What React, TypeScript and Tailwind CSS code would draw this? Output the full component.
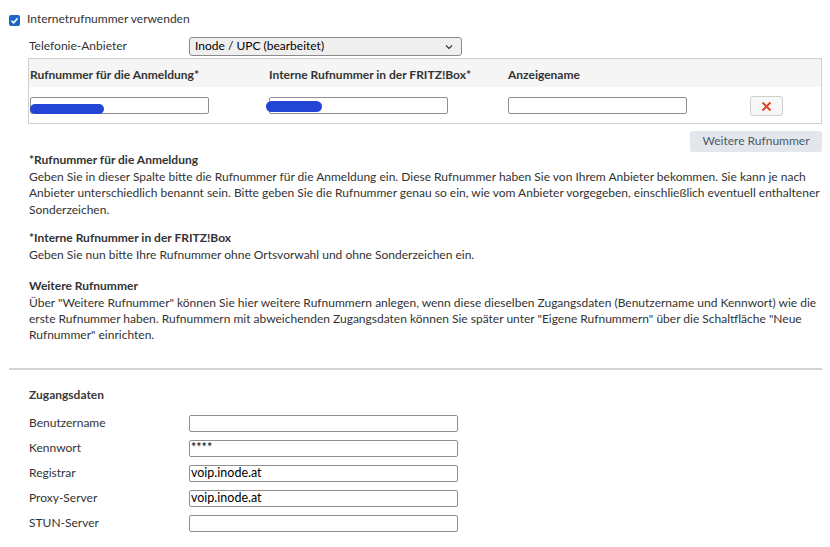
import React from "react";

const font = { fontFamily: "Lato, 'Open Sans', sans-serif" };

function Input({ value, className = "" }: { value?: string; className?: string }) {
  return (
    <div
      className={`h-[17px] border border-[#8f8f8f] bg-white rounded-[2px] flex items-center px-[1px] text-[12.5px] text-black leading-none ${className}`}
    >
      {value}
    </div>
  );
}

export default function App() {
  return (
    <div className="w-[830px] h-[547px] bg-white text-[#333] text-[12px] leading-[16.5px] overflow-hidden relative" style={font}>
      <div className="pt-[12px] pl-[9px] pr-[8px]">
        <div className="flex items-center gap-[7px] h-[15px]">
          <div className="w-[11px] h-[11px] rounded-[2px] bg-[#1d66c8] flex items-center justify-center mt-[1px]">
            <svg width="9" height="9" viewBox="0 0 9 9">
              <path d="M1.5 4.7 L3.6 6.8 L7.6 2.2" stroke="white" strokeWidth="1.6" fill="none" />
            </svg>
          </div>
          <span>Internetrufnummer verwenden</span>
        </div>

        <div className="pl-[20px]">
          <div className="flex items-center mt-[10px] h-[19px]">
            <span className="w-[160px]">Telefonie-Anbieter</span>
            <div className="w-[273px] h-[19px] border border-[#8a8a8a] rounded-[3px] bg-[#efefef] flex items-center justify-between pl-[5px] pr-[8px] text-black">
              <span>Inode / UPC (bearbeitet)</span>
              <svg width="8" height="6" viewBox="0 0 8 6">
                <path d="M1 1.5 L4 4.5 L7 1.5" stroke="#333" strokeWidth="1.2" fill="none" />
              </svg>
            </div>
          </div>

          <div className="mt-[2px] ml-[-1px] border border-[#cfcfcf] relative">
            <div className="flex items-center h-[28px] pt-[4px] bg-[#f5f5f5] font-bold pl-[1px]">
              <span className="w-[239px]">Rufnummer für die Anmeldung*</span>
              <span className="w-[239px]">Interne Rufnummer in der FRITZ!Box*</span>
              <span>Anzeigename</span>
            </div>
            <div className="flex items-center h-[36px] pl-[1px]">
              <div className="w-[239px] relative">
                <Input className="w-[179px]" />
                <div className="absolute left-[0px] top-[7px] w-[74px] h-[10px] rounded-full bg-[#2345d6]" />
              </div>
              <div className="w-[239px] relative">
                <Input className="w-[179px]" />
                <div className="absolute left-[-3px] top-[4px] w-[56px] h-[11px] rounded-full bg-[#2345d6]" />
              </div>
              <div className="w-[242px]">
                <Input className="w-[179px]" />
              </div>
              <div className="w-[33px] h-[20px] border border-[#cfcfcf] rounded-[3px] bg-[#f7f7f7] flex items-center justify-center mt-[2px]">
                <svg width="11" height="11" viewBox="0 0 11 11">
                  <path d="M1.5 1.5 L9.5 9.5 M9.5 1.5 L1.5 9.5" stroke="#e0462a" strokeWidth="2" />
                </svg>
              </div>
            </div>
          </div>

          <div className="flex justify-end mt-[7px]">
            <div className="w-[132px] h-[21px] bg-[#e3e7ec] rounded-[3px] flex items-center justify-center text-[#4a5a6a] text-[12px]">
              Weitere Rufnummer
            </div>
          </div>

          <div className="whitespace-nowrap">
            <div className="font-bold">*Rufnummer für die Anmeldung</div>
            <div>
              Geben Sie in dieser Spalte bitte die Rufnummer für die Anmeldung ein. Diese Rufnummer haben Sie von Ihrem Anbieter bekommen. Sie kann je nach
              <br />
              Anbieter unterschiedlich benannt sein. Bitte geben Sie die Rufnummer genau so ein, wie vom Anbieter vorgegeben, einschließlich eventuell enthaltener
              <br />
              Sonderzeichen.
            </div>
            <div className="font-bold mt-[12px]">*Interne Rufnummer in der FRITZ!Box</div>
            <div>Geben Sie nun bitte Ihre Rufnummer ohne Ortsvorwahl und ohne Sonderzeichen ein.</div>
            <div className="font-bold mt-[15px]">Weitere Rufnummer</div>
            <div className="leading-[16.2px]">
              Über "Weitere Rufnummer" können Sie hier weitere Rufnummern anlegen, wenn diese dieselben Zugangsdaten (Benutzername und Kennwort) wie die
              <br />
              erste Rufnummer haben. Rufnummern mit abweichenden Zugangsdaten können Sie später unter "Eigene Rufnummern" über die Schaltfläche "Neue
              <br />
              Rufnummer" einrichten.
            </div>
          </div>
        </div>

        <div className="mt-[25px] h-[2px] bg-[#d4d4d4]" />

        <div className="pl-[20px] pt-[17px]">
          <div className="font-bold text-[#3a3a3a]">Zugangsdaten</div>
          <div className="mt-[11px] flex flex-col gap-[8px]">
            {[
              ["Benutzername", ""],
              ["Kennwort", "****"],
              ["Registrar", "voip.inode.at"],
              ["Proxy-Server", "voip.inode.at"],
              ["STUN-Server", ""],
            ].map(([l, v]) => (
              <div key={l} className="flex items-center h-[17px]">
                <span className="w-[160px]">{l}</span>
                <Input className="w-[269px]" value={v} />
              </div>
            ))}
          </div>
        </div>
      </div>
    </div>
  );
}
